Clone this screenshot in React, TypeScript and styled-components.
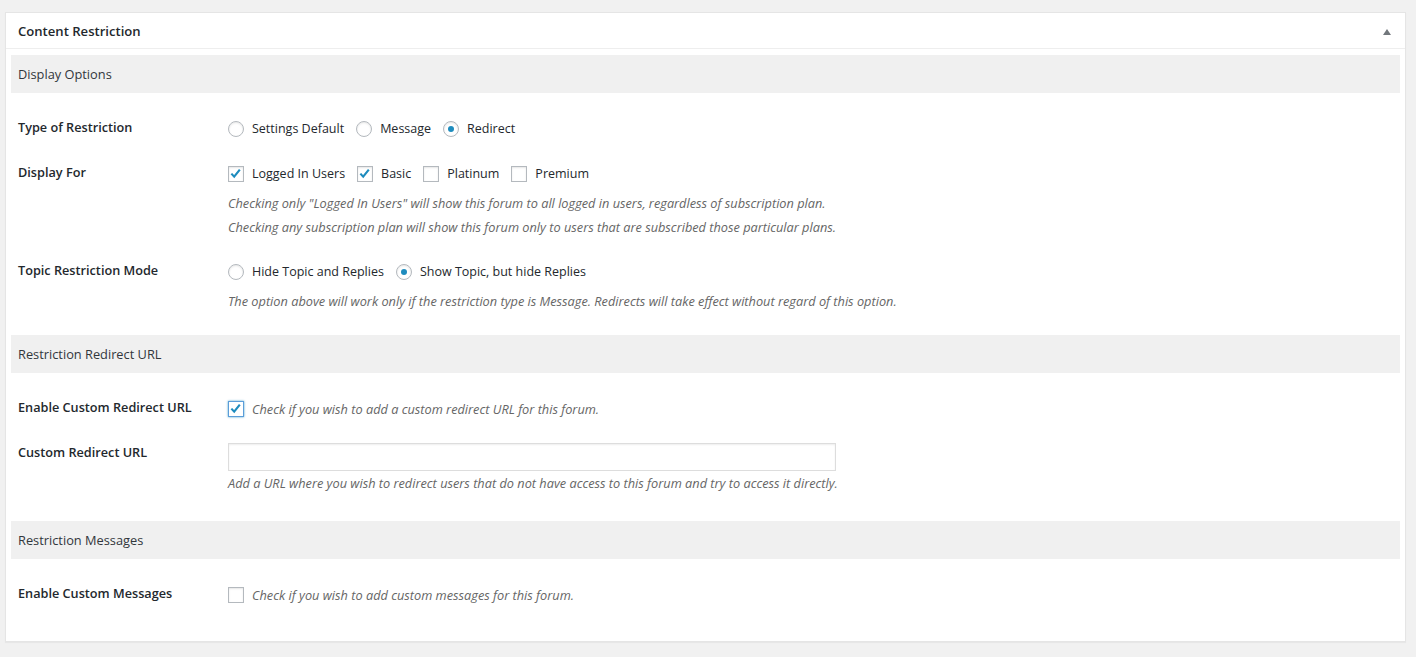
import React from "react";
import styled, { createGlobalStyle } from "styled-components";

const Global = createGlobalStyle`
  html, body { margin: 0; padding: 0; background: #f1f1f1; }
  body { font-family: "Open Sans", "Noto Sans", sans-serif; color: #23282d; font-size: 12.5px; }
  * { box-sizing: border-box; }
`;

const Page = styled.div`
  padding: 12px 10px 15px 5px;
`;

const Panel = styled.div`
  background: #fff;
  border: 1px solid #e5e5e5;
  box-shadow: 0 1px 1px rgba(0, 0, 0, 0.04);
`;

const PanelHeader = styled.div`
  height: 36px;
  display: flex;
  align-items: center;
  justify-content: space-between;
  padding: 0 14px 0 12px;
  border-bottom: 1px solid #eee;
`;

const PanelTitle = styled.h2`
  margin: 0;
  font-size: 13.1px;
  font-weight: 600;
  color: #23282d;
`;

const Toggle = styled.span`
  width: 0;
  height: 0;
  border-left: 4px solid transparent;
  border-right: 4px solid transparent;
  border-bottom: 6px solid #72777c;
  margin-top: 2px;
`;

const PanelBody = styled.div`
  padding: 6px 5px 0 5px;
`;

const Band = styled.div`
  background: #f0f0f0;
  height: 38px;
  display: flex;
  align-items: center;
  padding-left: 7px;
  font-size: 12.8px;
  color: #32373c;
`;

const Section = styled.div<{ $bottom: number }>`
  display: flex;
  flex-direction: column;
  gap: 21px;
  padding: 24px 7px ${(p) => p.$bottom}px;
`;

const Row = styled.div`
  display: grid;
  grid-template-columns: 210px 1fr;
`;

const Label = styled.div`
  font-size: 12.7px;
  font-weight: 600;
  line-height: 20px;
  color: #23282d;
`;

const Controls = styled.div`
  display: flex;
  flex-direction: column;
`;

const Options = styled.div`
  display: flex;
  align-items: center;
  gap: 12px;
  height: 24px;
`;

const Option = styled.label`
  display: flex;
  align-items: center;
  gap: 8px;
  line-height: 24px;
  white-space: nowrap;
`;

const Radio = styled.span<{ $on?: boolean }>`
  width: 16px;
  height: 16px;
  border-radius: 50%;
  border: 1px solid #b4b9be;
  box-shadow: inset 0 1px 2px rgba(0, 0, 0, 0.1);
  background: #fff;
  display: flex;
  align-items: center;
  justify-content: center;
  flex: none;
  &::after {
    content: "";
    display: ${(p) => (p.$on ? "block" : "none")};
    width: 6px;
    height: 6px;
    border-radius: 50%;
    background: #1e8cbe;
  }
`;

const Box = styled.span<{ $focus?: boolean }>`
  width: 16px;
  height: 16px;
  border: 1px solid ${(p) => (p.$focus ? "#5b9dd9" : "#b4b9be")};
  box-shadow: ${(p) =>
    p.$focus ? "0 0 2px rgba(30,140,190,.8)" : "inset 0 1px 2px rgba(0,0,0,.1)"};
  background: #fff;
  flex: none;
  display: flex;
  align-items: center;
  justify-content: center;
`;

const Desc = styled.p<{ $top?: number }>`
  margin: ${(p) => p.$top ?? 0}px 0 0;
  font-style: italic;
  color: #666;
  line-height: 24px;
  font-size: 12.75px;
`;

const Input = styled.input`
  width: 608px;
  height: 28px;
  margin-top: 1px;
  border: 1px solid #ddd;
  box-shadow: inset 0 1px 2px rgba(0, 0, 0, 0.07);
  background: #fff;
  outline: none;
  padding: 3px 5px;
`;

const Check = () => (
  <svg width="16" height="16" viewBox="0 0 16 16" style={{ marginLeft: -1, marginTop: -1 }}>
    <path d="M3.6 7.6 L6.6 10.8 L12.6 3.4" fill="none" stroke="#1e8cbe" strokeWidth="2.3" strokeLinecap="butt" strokeLinejoin="miter" />
  </svg>
);

const CheckBox = ({ on, focus }: { on?: boolean; focus?: boolean }) => (
  <Box $focus={focus}>{on && <Check />}</Box>
);

export default function App() {
  return (
    <>
      <Global />
      <Page>
        <Panel>
          <PanelHeader>
            <PanelTitle>Content Restriction</PanelTitle>
            <Toggle />
          </PanelHeader>
          <PanelBody>
            <Band>Display Options</Band>
            <Section $bottom={22}>
              <Row>
                <Label>Type of Restriction</Label>
                <Controls>
                  <Options>
                    <Option><Radio />Settings Default</Option>
                    <Option><Radio />Message</Option>
                    <Option><Radio $on />Redirect</Option>
                  </Options>
                </Controls>
              </Row>
              <Row>
                <Label>Display For</Label>
                <Controls>
                  <Options>
                    <Option><CheckBox on />Logged In Users</Option>
                    <Option><CheckBox on />Basic</Option>
                    <Option><CheckBox />Platinum</Option>
                    <Option><CheckBox />Premium</Option>
                  </Options>
                  <Desc $top={5}>
                    Checking only "Logged In Users" will show this forum to all logged in users, regardless of subscription plan.
                  </Desc>
                  <Desc>
                    Checking any subscription plan will show this forum only to users that are subscribed those particular plans.
                  </Desc>
                </Controls>
              </Row>
              <Row>
                <Label>Topic Restriction Mode</Label>
                <Controls>
                  <Options>
                    <Option><Radio />Hide Topic and Replies</Option>
                    <Option><Radio $on />Show Topic, but hide Replies</Option>
                  </Options>
                  <Desc $top={5}>
                    The option above will work only if the restriction type is Message. Redirects will take effect without regard of this option.
                  </Desc>
                </Controls>
              </Row>
            </Section>
            <Band>Restriction Redirect URL</Band>
            <Section $bottom={26}>
              <Row>
                <Label>Enable Custom Redirect URL</Label>
                <Controls>
                  <Options>
                    <Option>
                      <CheckBox on focus />
                      <Desc as="span">Check if you wish to add a custom redirect URL for this forum.</Desc>
                    </Option>
                  </Options>
                </Controls>
              </Row>
              <Row>
                <Label>Custom Redirect URL</Label>
                <Controls>
                  <Input type="text" />
                  <Desc>
                    Add a URL where you wish to redirect users that do not have access to this forum and try to access it directly.
                  </Desc>
                </Controls>
              </Row>
            </Section>
            <Band>Restriction Messages</Band>
            <Section $bottom={34}>
              <Row>
                <Label>Enable Custom Messages</Label>
                <Controls>
                  <Options>
                    <Option>
                      <CheckBox />
                      <Desc as="span">Check if you wish to add custom messages for this forum.</Desc>
                    </Option>
                  </Options>
                </Controls>
              </Row>
            </Section>
          </PanelBody>
        </Panel>
      </Page>
    </>
  );
}
